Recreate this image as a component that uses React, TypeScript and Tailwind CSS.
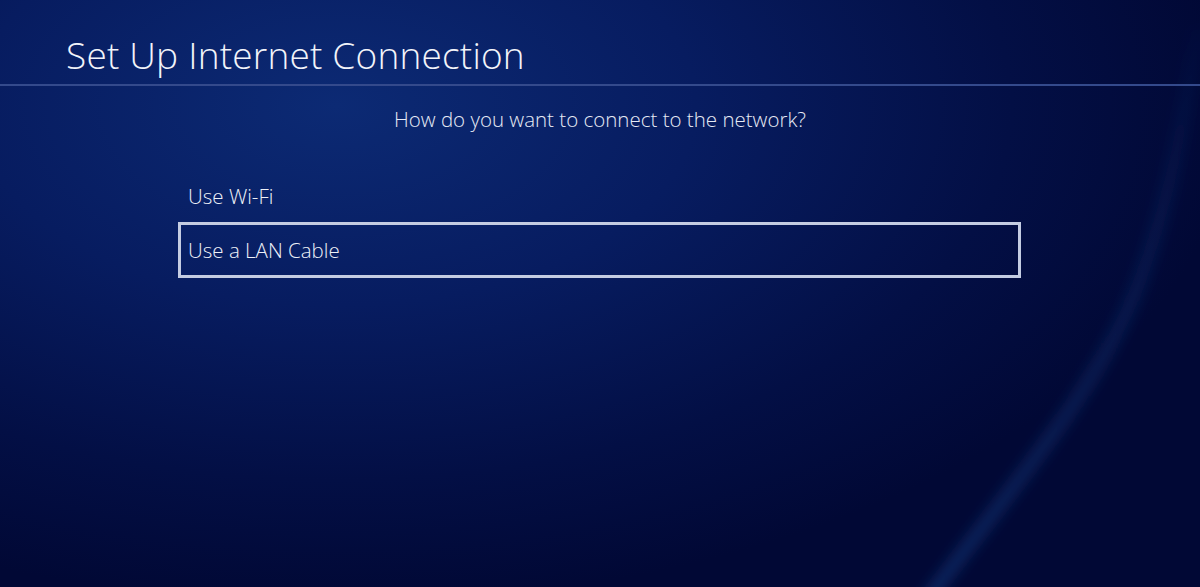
import React from "react"

const font = "font-['Open_Sans','Liberation_Sans',sans-serif]"

function BackgroundArt() {
  return (
    <svg className="pointer-events-none absolute inset-0 h-full w-full" viewBox="0 0 1200 587" preserveAspectRatio="none">
      <defs>
        <linearGradient id="streak" x1="0" y1="1" x2="0" y2="0">
          <stop offset="0" stopColor="#2f74d0" stopOpacity="0.32" />
          <stop offset="0.45" stopColor="#2f74d0" stopOpacity="0.2" />
          <stop offset="1" stopColor="#2f74d0" stopOpacity="0.03" />
        </linearGradient>
        <filter id="blur" x="-30%" y="-30%" width="160%" height="160%">
          <feGaussianBlur stdDeviation="7" />
        </filter>
      </defs>
      <path d="M920 610 C 1000 500, 1100 390, 1140 280 S 1185 90, 1200 30" fill="none" stroke="url(#streak)" strokeWidth="12" filter="url(#blur)" />
    </svg>
  )
}

export default function App() {
  return (
    <div
      className={`relative h-[587px] w-[1200px] overflow-hidden bg-[#031650] bg-[radial-gradient(ellipse_75%_85%_at_28%_18%,#0c2a74_0%,#071c60_40%,#030f45_75%,#010835_100%)] text-white ${font}`}
    >
      <BackgroundArt />
      <div className="relative flex flex-col">
        <header className="h-[86px] border-b-2 border-[#344a8c] pl-[66px] pt-[36px]">
          <h1 className="text-[37px] font-light leading-none tracking-[0.2px] text-[#f2f4fa]">Set Up Internet Connection</h1>
        </header>
        <p className="mt-[21px] text-center text-[20.5px] font-light leading-6 text-[#e6eaf5]">
          How do you want to connect to the network?
        </p>
        <ul className="ml-[178px] mt-[40px] w-[843px]">
          <li className="flex h-[51px] items-center pl-[10px] text-[20.5px] font-light text-[#eef1f8]">Use Wi-Fi</li>
          <li className="flex h-[56px] items-center border-[3px] border-[#c4cce2] pl-[7px] text-[20.5px] font-light text-[#eef1f8]">
            Use a LAN Cable
          </li>
        </ul>
      </div>
    </div>
  )
}
